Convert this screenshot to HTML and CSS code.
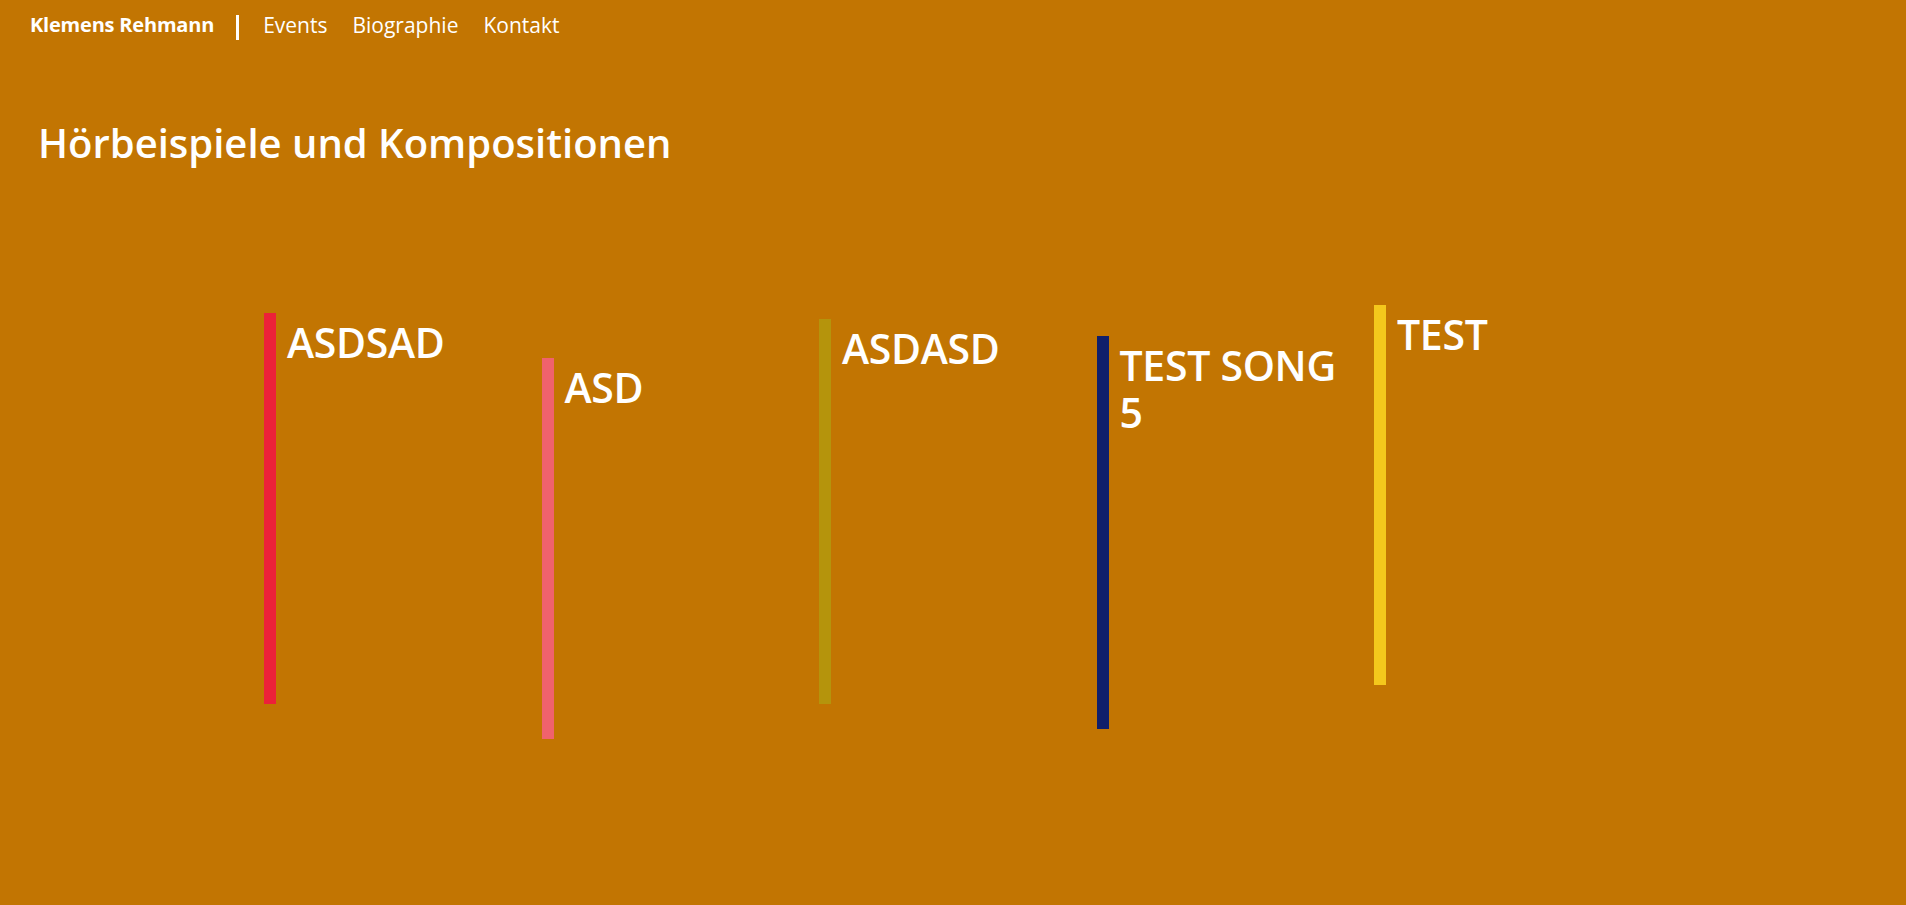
FILE: index.html
```html
<!DOCTYPE html>
<html lang="de">
<head>
<meta charset="utf-8">
<title>Klemens Rehmann – Hörbeispiele und Kompositionen</title>
<link rel="stylesheet" href="styles.css">
</head>
<body>
<nav class="nav">
  <a class="brand" href="#">Klemens Rehmann</a>
  <span class="divider"></span>
  <a class="nav-link" href="#">Events</a>
  <a class="nav-link" href="#">Biographie</a>
  <a class="nav-link" href="#">Kontakt</a>
</nav>
<main>
  <h1 class="page-title">Hörbeispiele und Kompositionen</h1>
  <section class="songs">
    <article class="song song-1"><h2 class="song-title">ASDSAD</h2></article>
    <article class="song song-2"><h2 class="song-title">ASD</h2></article>
    <article class="song song-3"><h2 class="song-title">ASDASD</h2></article>
    <article class="song song-4"><h2 class="song-title">TEST SONG 5</h2></article>
    <article class="song song-5"><h2 class="song-title">TEST</h2></article>
  </section>
</main>
</body>
</html>
```
FILE: styles.css
```css
html, body {
  margin: 0;
  padding: 0;
}
body {
  background: #c27502;
  color: #ffffff;
  font-family: "Open Sans", "Noto Sans", sans-serif;
  min-height: 905px;
}
a {
  color: #ffffff;
  text-decoration: none;
}
.nav {
  display: flex;
  align-items: flex-start;
  padding: 11px 0 0 30px;
  height: 28px;
}
.brand {
  font-size: 20px;
  font-weight: 700;
  line-height: 28px;
  letter-spacing: -0.2px;
}
.divider {
  width: 3px;
  height: 25px;
  margin: 4px 24px 0 22px;
  background: #ffffff;
}
.nav-link {
  font-size: 21px;
  line-height: 28px;
  margin-right: 25px;
}
.page-title {
  margin: 77px 0 0 38px;
  font-size: 40px;
  font-weight: 600;
  line-height: 54px;
}
.songs {
  display: grid;
  grid-template-columns: repeat(5, 277.5px);
  align-items: start;
  margin: 135px 0 0 264px;
}
.song {
  border-left: 12px solid;
  padding: 6px 0 0 11px;
  width: 235px;
  box-sizing: content-box;
}
.song-title {
  margin: 0;
  font-size: 41px;
  font-weight: 600;
  line-height: 47px;
  letter-spacing: -0.3px;
}
.song-1 { border-color: #ec2139; margin-top: 8px;  height: 385px; }
.song-2 { border-color: #f0626d; margin-top: 53px; height: 375px; }
.song-3 { border-color: #b5940c; margin-top: 14px; height: 379px; }
.song-4 { border-color: #101f6b; margin-top: 31px; height: 387px; }
.song-5 { border-color: #f4c81c; margin-top: 0;    height: 374px; }
```
